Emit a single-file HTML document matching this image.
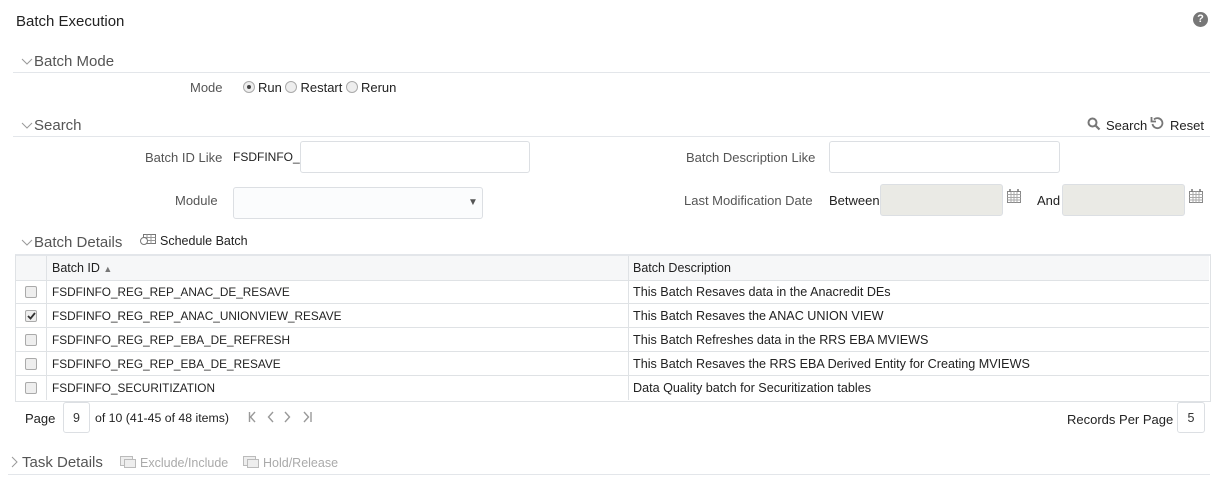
<!DOCTYPE html>
<html><head><style>
body{margin:0;width:1217px;height:479px;background:#fff;font-family:"Liberation Sans",sans-serif;color:#333;position:relative;overflow:hidden}
.a{position:absolute;white-space:nowrap}
.t13{font-size:13px}
.sec{font-size:15px;color:#555}
.hr{position:absolute;height:1px;background:#e3e6ea}
.inp{position:absolute;border:1px solid #dcdfe3;border-radius:3px;background:#fff;box-sizing:border-box}
.dis{background:#eaeae5}
.rad{display:inline-block;width:10px;height:10px;border:1px solid #aaa;border-radius:50%;background:#eee;vertical-align:-1px;margin-right:3px;position:relative}
.cb{position:absolute;left:25px;width:10px;height:10px;border:1px solid #aaa;border-radius:2px;background:#eee}
.row{position:absolute;left:15px;width:1194px;height:23px;border-bottom:1px solid #dfe2e5;color:#222}
.row span{position:absolute;top:5px}
.row span:first-child{font-size:11.8px}
.row span:last-child{font-size:12.6px}
.lbl{color:#555;font-size:13px}
.chev{position:absolute;width:12px;height:8px}
</style></head><body>
<div class="a" style="left:16px;top:13px;font-size:15px;color:#222">Batch Execution</div>
<div class="a" style="left:1193px;top:12px;width:15px;height:15px;border-radius:50%;background:#777;color:#fff;font-size:11px;font-weight:bold;text-align:center;line-height:15px">?</div>

<svg class="chev" style="left:21px;top:58px" viewBox="0 0 12 8"><path d="M1 1l5 5 5-5" fill="none" stroke="#999" stroke-width="1"/></svg>
<div class="a sec" style="left:34px;top:53px">Batch Mode</div>
<div class="hr" style="left:13px;top:72px;width:1197px"></div>
<div class="a lbl" style="left:190px;top:80px">Mode</div>
<div class="a t13" style="left:243px;top:80px;color:#222"><span class="rad"><span style="position:absolute;left:3px;top:3px;width:4px;height:4px;border-radius:50%;background:#444"></span></span>Run <span class="rad"></span>Restart <span class="rad"></span>Rerun</div>

<svg class="chev" style="left:21px;top:122px" viewBox="0 0 12 8"><path d="M1 1l5 5 5-5" fill="none" stroke="#999" stroke-width="1"/></svg>
<div class="a sec" style="left:34px;top:117px">Search</div>
<div class="hr" style="left:13px;top:136px;width:1197px"></div>
<svg class="a" style="left:1087px;top:117px" width="14" height="14" viewBox="0 0 14 14"><circle cx="5.5" cy="5.5" r="4" fill="none" stroke="#777" stroke-width="2"/><path d="M8.5 8.5l4 4" stroke="#777" stroke-width="2.2"/></svg>
<div class="a t13" style="left:1106px;top:118px;color:#222">Search</div>
<svg class="a" style="left:1150px;top:116px" width="14" height="14" viewBox="0 0 14 14"><path d="M4 3.5A5 5 0 1 1 2.5 8" fill="none" stroke="#777" stroke-width="1.8"/><path d="M1.5 1v4.5H6" fill="none" stroke="#777" stroke-width="1.8"/></svg>
<div class="a t13" style="left:1170px;top:118px;color:#222">Reset</div>

<div class="a lbl" style="left:145px;top:150px">Batch ID Like</div>
<div class="a" style="left:233px;top:150px;color:#222;font-size:12px">FSDFINFO_</div>
<div class="inp" style="left:300px;top:141px;width:230px;height:32px"></div>
<div class="a lbl" style="left:686px;top:150px">Batch Description Like</div>
<div class="inp" style="left:829px;top:141px;width:231px;height:32px"></div>

<div class="a lbl" style="left:175px;top:193px">Module</div>
<div class="inp" style="left:233px;top:187px;width:250px;height:32px;background:#fbfcfd"></div>
<div class="a" style="left:468px;top:197px;font-size:10px;color:#555">&#9660;</div>
<div class="a lbl" style="left:684px;top:193px">Last Modification Date</div>
<div class="a t13" style="left:829px;top:193px;color:#222">Between</div>
<div class="inp dis" style="left:880px;top:184px;width:123px;height:32px"></div>
<svg class="a" style="left:1007px;top:189px" width="14" height="14" viewBox="0 0 14 14"><rect x="0.5" y="2.5" width="13" height="11" fill="#fff" stroke="#888"/><path d="M0.5 5.5h13M4 2.5v11M7 2.5v11M10 2.5v11M0.5 8.5h13M0.5 11h13" stroke="#aaa"/><path d="M3 0v3M11 0v3" stroke="#777" stroke-width="1.5"/></svg>
<div class="a t13" style="left:1037px;top:193px;color:#222">And</div>
<div class="inp dis" style="left:1062px;top:184px;width:123px;height:32px"></div>
<svg class="a" style="left:1189px;top:189px" width="14" height="14" viewBox="0 0 14 14"><rect x="0.5" y="2.5" width="13" height="11" fill="#fff" stroke="#888"/><path d="M0.5 5.5h13M4 2.5v11M7 2.5v11M10 2.5v11M0.5 8.5h13M0.5 11h13" stroke="#aaa"/><path d="M3 0v3M11 0v3" stroke="#777" stroke-width="1.5"/></svg>

<svg class="chev" style="left:21px;top:239px" viewBox="0 0 12 8"><path d="M1 1l5 5 5-5" fill="none" stroke="#999" stroke-width="1"/></svg>
<div class="a sec" style="left:34px;top:234px">Batch Details</div>
<svg class="a" style="left:140px;top:234px" width="16" height="12" viewBox="0 0 16 12"><rect x="3.5" y="0.5" width="12" height="9" fill="#fff" stroke="#777"/><path d="M3.5 3.5h12M3.5 6.5h12M7 0.5v9M11 0.5v9" stroke="#999"/><circle cx="4" cy="7" r="3.5" fill="#fff" stroke="#777"/></svg>
<div class="a" style="left:160px;top:234px;font-size:12.5px;color:#222">Schedule Batch</div>

<div class="a" style="left:15px;top:254px;width:1194px;height:145px;border:1px solid #dfe2e5;border-top:2px solid #e3e6ea"></div>
<div class="a" style="left:16px;top:256px;width:1193px;height:24px;background:#f6f7f8;border-bottom:1px solid #dfe2e5"></div>
<div class="a" style="left:46px;top:256px;width:1px;height:144px;background:#dfe2e5"></div>
<div class="a" style="left:628px;top:256px;width:1px;height:144px;background:#dfe2e5"></div>
<div class="a" style="left:52px;top:261px;font-size:12.5px;color:#222">Batch ID <span style="font-size:9px;color:#777">&#9650;</span></div>
<div class="a" style="left:633px;top:261px;font-size:12.5px;color:#222">Batch Description</div>

<div class="row" style="top:280px"><span style="left:37px">FSDFINFO_REG_REP_ANAC_DE_RESAVE</span><span style="left:618px">This Batch Resaves data in the Anacredit DEs</span></div>
<div class="row" style="top:304px"><span style="left:37px">FSDFINFO_REG_REP_ANAC_UNIONVIEW_RESAVE</span><span style="left:618px">This Batch Resaves the ANAC UNION VIEW</span></div>
<div class="row" style="top:328px"><span style="left:37px">FSDFINFO_REG_REP_EBA_DE_REFRESH</span><span style="left:618px">This Batch Refreshes data in the RRS EBA MVIEWS</span></div>
<div class="row" style="top:352px"><span style="left:37px">FSDFINFO_REG_REP_EBA_DE_RESAVE</span><span style="left:618px">This Batch Resaves the RRS EBA Derived Entity for Creating MVIEWS</span></div>
<div class="row" style="top:376px;border-bottom:none"><span style="left:37px">FSDFINFO_SECURITIZATION</span><span style="left:618px">Data Quality batch for Securitization tables</span></div>
<div class="cb" style="top:286px"></div>
<div class="cb" style="top:310px"><svg style="position:absolute;left:1px;top:1px" width="9" height="8" viewBox="0 0 9 8"><path d="M1 4l2.5 2.5L8 1" fill="none" stroke="#333" stroke-width="1.8"/></svg></div>
<div class="cb" style="top:334px"></div>
<div class="cb" style="top:358px"></div>
<div class="cb" style="top:382px"></div>

<div class="a t13" style="left:25px;top:411px;color:#222">Page</div>
<div class="inp" style="left:63px;top:402px;width:27px;height:31px;text-align:center;line-height:31px;font-size:12.5px">9</div>
<div class="a" style="left:95px;top:411px;color:#222;font-size:12.3px">of 10 (41-45 of 48 items)</div>
<svg class="a" style="left:248px;top:411px" width="66" height="12" viewBox="0 0 66 12"><g fill="none" stroke="#999" stroke-width="1.4"><path d="M1.5 1v10M7 1L2.5 6 7 11"/><path d="M25 1L20.5 6 25 11"/><path d="M37 1l4.5 5L37 11"/><path d="M56 1l4.5 5L56 11M63 1v10"/></g></svg>
<div class="a t13" style="left:1067px;top:412px;color:#222">Records Per Page</div>
<div class="inp" style="left:1177px;top:402px;width:28px;height:31px;text-align:center;line-height:31px;font-size:12.5px">5</div>

<svg class="a" style="left:11px;top:456px" width="7" height="12" viewBox="0 0 7 12"><path d="M1 1l5 5-5 5" fill="none" stroke="#999"/></svg>
<div class="a sec" style="left:22px;top:454px">Task Details</div>
<svg class="a" style="left:120px;top:456px" width="16" height="12" viewBox="0 0 16 12"><rect x="0.5" y="0.5" width="12" height="9" fill="#eee" stroke="#bbb"/><rect x="4.5" y="3.5" width="11" height="8" fill="#eee" stroke="#bbb"/></svg>
<div class="a" style="left:140px;top:456px;font-size:12.5px;color:#aaa">Exclude/Include</div>
<svg class="a" style="left:243px;top:456px" width="16" height="12" viewBox="0 0 16 12"><rect x="0.5" y="0.5" width="12" height="9" fill="#eee" stroke="#bbb"/><rect x="4.5" y="3.5" width="11" height="8" fill="#eee" stroke="#bbb"/></svg>
<div class="a" style="left:263px;top:456px;font-size:12.5px;color:#aaa">Hold/Release</div>
<div class="hr" style="left:8px;top:474px;width:1202px"></div>
</body></html>
